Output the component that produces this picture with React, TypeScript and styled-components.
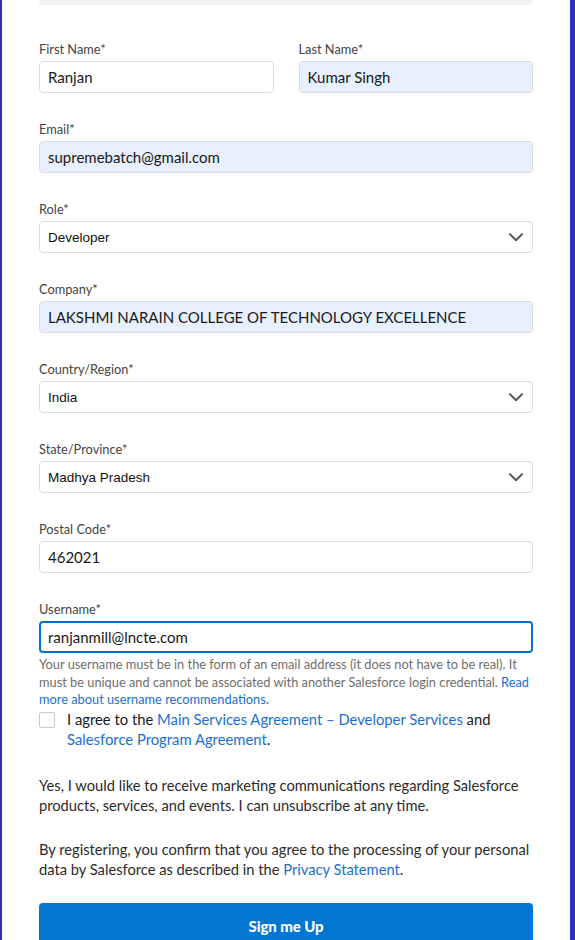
import React from "react";
import styled, { createGlobalStyle } from "styled-components";

const GlobalStyle = createGlobalStyle`
  html, body {
    margin: 0;
    padding: 0;
    background: #3131b6;
  }
  body {
    font-family: Lato, "Open Sans", sans-serif;
    -webkit-font-smoothing: antialiased;
  }
  * { box-sizing: border-box; }
`;

const Page = styled.div`
  display: flex;
  min-height: 940px;
  padding: 0 5px 0 2px;
`;

const Card = styled.main`
  flex: 1;
  background: #ffffff;
  padding: 0 37px 40px;
  display: flex;
  flex-direction: column;
`;

const TopStub = styled.div`
  height: 5px;
  background: #f3f3f3;
  border-radius: 0 0 4px 4px;
  margin-bottom: 35px;
`;

const Row = styled.div`
  display: grid;
  grid-template-columns: 1fr 1fr;
  column-gap: 25px;
`;

const Field = styled.div<{ $last?: boolean }>`
  display: flex;
  flex-direction: column;
  margin-bottom: ${(p) => (p.$last ? "0" : "27px")};
`;

const Label = styled.label`
  font-size: 12.8px;
  line-height: 18px;
  color: #444444;
  margin-bottom: 3px;
`;

const TextInput = styled.input<{ $filled?: boolean; $focused?: boolean }>`
  height: 32px;
  width: 100%;
  border: ${(p) => (p.$focused ? "2px solid #0b6fd0" : "1px solid #dcdcdc")};
  border-radius: 4px;
  background: ${(p) => (p.$filled ? "#e8f0fe" : "#ffffff")};
  padding: 0 ${(p) => (p.$focused ? "7px" : "8px")};
  font-family: Lato, sans-serif;
  font-size: 15px;
  color: #181818;
  outline: none;
`;

const SelectBox = styled.div`
  height: 32px;
  border: 1px solid #dcdcdc;
  border-radius: 4px;
  background: #ffffff;
  padding: 0 8px 0 8px;
  display: flex;
  align-items: center;
  justify-content: space-between;
  font-family: "Liberation Sans", Arial, sans-serif;
  font-size: 13.5px;
  color: #111111;
`;

const Chevron = styled.svg`
  width: 14px;
  height: 9px;
  margin-right: 1px;
`;

const Help = styled.p`
  margin: 3px 0 0;
  font-size: 12.8px;
  line-height: 17.5px;
  color: #706e6b;
`;

const Link = styled.a`
  color: #1b6fd1;
  text-decoration: none;
`;

const CheckRow = styled.div`
  display: flex;
  align-items: flex-start;
  gap: 12px;
`;

const Box = styled.span`
  flex: none;
  width: 16px;
  height: 16px;
  margin-top: 3px;
  border: 1px solid #c9c9c9;
  border-radius: 2px;
  background: #fff;
`;

const CheckText = styled.span`
  font-size: 14.8px;
  line-height: 20px;
  color: #181818;
`;

const Para = styled.p<{ $gap: number }>`
  margin: ${(p) => p.$gap}px 0 0;
  font-size: 14.7px;
  line-height: 20px;
  color: #2b2b2b;
  white-space: nowrap;
`;

const Submit = styled.button`
  margin-top: 24px;
  height: 46px;
  width: 100%;
  border: none;
  border-radius: 4px;
  background: #0176d3;
  color: #ffffff;
  font-family: Lato, sans-serif;
  font-weight: 900;
  font-size: 15px;
  letter-spacing: -0.1px;
`;

function ChevronIcon() {
  return (
    <Chevron viewBox="0 0 14 9" fill="none">
      <path d="M1 1.2 L7 7.2 L13 1.2" stroke="#5a5a5a" strokeWidth="2" strokeLinecap="round" strokeLinejoin="round" />
    </Chevron>
  );
}

function InputField(props: { label: string; value: string; filled?: boolean; focused?: boolean; last?: boolean }) {
  return (
    <Field $last={props.last}>
      <Label>{props.label}</Label>
      <TextInput readOnly value={props.value} $filled={props.filled} $focused={props.focused} />
    </Field>
  );
}

function SelectField(props: { label: string; value: string }) {
  return (
    <Field>
      <Label>{props.label}</Label>
      <SelectBox role="combobox">
        <span>{props.value}</span>
        <ChevronIcon />
      </SelectBox>
    </Field>
  );
}

export default function App() {
  return (
    <>
      <GlobalStyle />
      <Page>
        <Card>
          <TopStub />
          <Row>
            <InputField label="First Name*" value="Ranjan" />
            <InputField label="Last Name*" value="Kumar Singh" filled />
          </Row>
          <InputField label="Email*" value="supremebatch@gmail.com" filled />
          <SelectField label="Role*" value="Developer" />
          <InputField label="Company*" value="LAKSHMI NARAIN COLLEGE OF TECHNOLOGY EXCELLENCE" filled />
          <SelectField label="Country/Region*" value="India" />
          <SelectField label="State/Province*" value="Madhya Pradesh" />
          <InputField label="Postal Code*" value="462021" />
          <InputField label="Username*" value="ranjanmill@lncte.com" focused last />
          <Help>
            Your username must be in the form of an email address (it does not have to be real). It
            <br />
            must be unique and cannot be associated with another Salesforce login credential.{" "}
            <Link href="#">Read</Link>
            <br />
            <Link href="#">more about username recommendations.</Link>
          </Help>
          <CheckRow>
            <Box />
            <CheckText>
              I agree to the <Link href="#">Main Services Agreement – Developer Services</Link> and
              <br />
              <Link href="#">Salesforce Program Agreement</Link>.
            </CheckText>
          </CheckRow>
          <Para $gap={26}>
            Yes, I would like to receive marketing communications regarding Salesforce
            <br />
            products, services, and events. I can unsubscribe at any time.
          </Para>
          <Para $gap={24}>
            By registering, you confirm that you agree to the processing of your personal
            <br />
            data by Salesforce as described in the <Link href="#">Privacy Statement</Link>.
          </Para>
          <Submit type="button">Sign me Up</Submit>
        </Card>
      </Page>
    </>
  );
}
